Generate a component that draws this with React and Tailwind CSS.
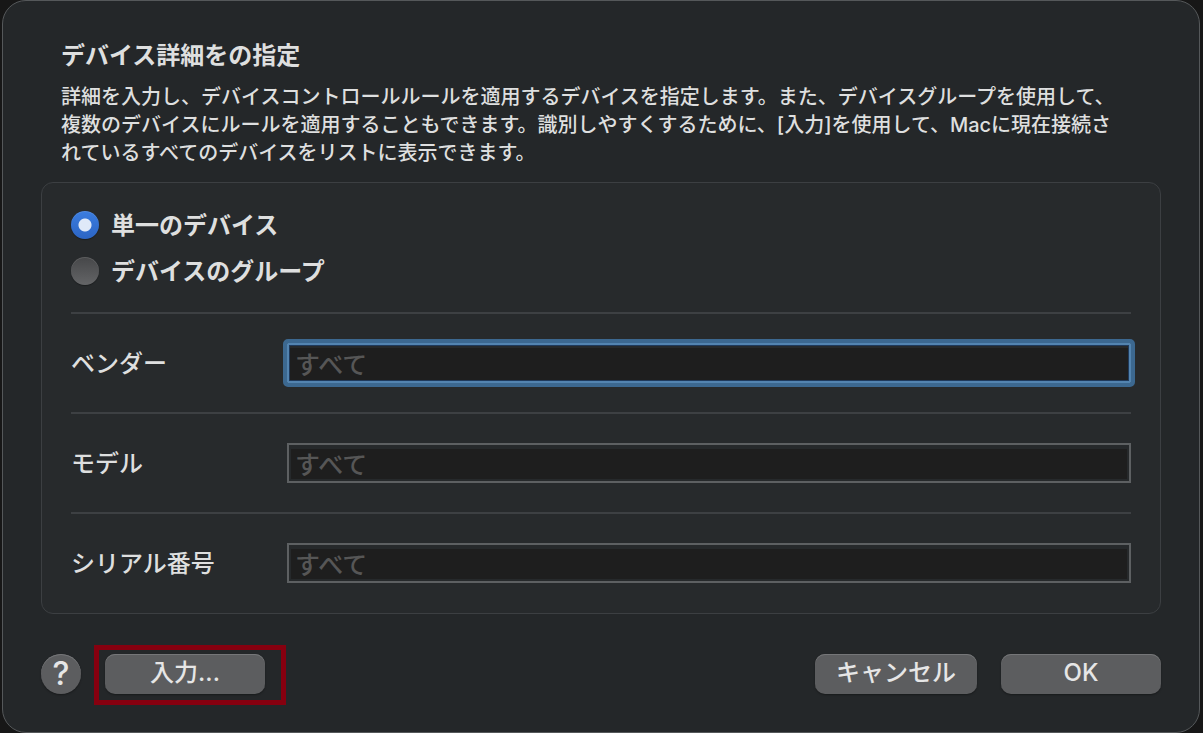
import { useState } from "react"

const fields = [
  { id: "vendor", label: "ベンダー" },
  { id: "model", label: "モデル" },
  { id: "serial", label: "シリアル番号" },
]

function Radio({ label, checked, onChange }) {
  return (
    <label className="flex items-center gap-3 h-[46px] text-2xl font-bold">
      <input
        type="radio"
        name="target"
        checked={checked}
        onChange={onChange}
        className="appearance-none shrink-0 size-7 rounded-full bg-linear-to-b from-[#464749] to-[#646567] shadow-[0_1px_1px_rgba(0,0,0,0.3),inset_0_1px_0_rgba(255,255,255,0.12)] checked:bg-[radial-gradient(circle,#dfe9f8_0_6px,transparent_7px),linear-gradient(#3b7de0,#2c65c4)]"
      />
      <span className="pt-0.5">{label}</span>
    </label>
  )
}

function Field({ id, label, focused, onFocus }) {
  return (
    <div className="flex items-center h-[100px] border-t-2 border-[#3d4043]">
      <label htmlFor={id} className="w-[216px] shrink-0 pt-0.5 text-2xl font-medium">
        {label}
      </label>
      <input
        id={id}
        type="text"
        placeholder="すべて"
        onFocus={onFocus}
        className={
          focused
            ? "flex-1 min-w-0 h-10 px-1.5 pt-1 border-2 border-[#5384b0] outline-4 outline-[#3c6890] rounded-[1px] bg-[#1e1e1e] shadow-[inset_0_0_0_1px_#1f3a5c,inset_0_3px_0_#26292b] text-[25px] font-medium placeholder:text-[#565656]"
            : "flex-1 min-w-0 h-10 px-1.5 pt-1 border-2 border-[#5d6062] outline-none bg-[#1e1e1e] shadow-[inset_0_0_0_2px_#26292b,inset_0_4px_0_#26292b] text-[25px] font-medium placeholder:text-[#565656]"
        }
      />
    </div>
  )
}

function PushButton({ children, className = "w-40" }) {
  return (
    <button
      type="button"
      className={`${className} h-10 pb-0.5 rounded-[10px] bg-[#5c5d5f] text-2xl font-medium text-[#e6e6e6] shadow-[0_1px_2px_rgba(0,0,0,0.35),inset_0_1px_0_#757678]`}
    >
      {children}
    </button>
  )
}

export default function App() {
  const [target, setTarget] = useState("single")
  const [active, setActive] = useState("vendor")

  return (
    <div className="min-h-screen flex bg-[#171717] pl-[2px] pr-[3px] font-['Inter','Noto_Sans_CJK_JP',sans-serif] text-[#dedfdf]">
      <div className="flex-1 flex flex-col px-[38px] pt-[39px] pb-[27px] border border-[#55585a] rounded-[24px] bg-[#242729]">
        <h1 className="px-5 text-2xl font-bold">デバイス詳細をの指定</h1>
        <p className="mt-[11px] px-5 text-xl leading-7 font-medium">
          詳細を入力し、デバイスコントロールルールを適用するデバイスを指定します。また、デバイスグループを使用して、
          <br />
          複数のデバイスにルールを適用することもできます。識別しやすくするために、[入力]を使用して、Macに現在接続さ
          <br />
          れているすべてのデバイスをリストに表示できます。
        </p>

        <div className="mt-[15px] px-[29px] pt-[19px] pb-px border border-[#3c3f42] rounded-xl bg-[#272a2c]">
          <fieldset className="pb-[18px]">
            <Radio
              label="単一のデバイス"
              checked={target === "single"}
              onChange={() => setTarget("single")}
            />
            <Radio
              label="デバイスのグループ"
              checked={target === "group"}
              onChange={() => setTarget("group")}
            />
          </fieldset>
          {fields.map((f) => (
            <Field
              key={f.id}
              id={f.id}
              label={f.label}
              focused={active === f.id}
              onFocus={() => setActive(f.id)}
            />
          ))}
        </div>

        <div className="mt-[31px] flex items-start">
          <button
            type="button"
            aria-label="ヘルプ"
            className="mt-[9px] size-10 rounded-full bg-[#5c5d5f] text-[32px] leading-none font-medium text-[#e6e6e6] shadow-[0_1px_2px_rgba(0,0,0,0.35),inset_0_1px_0_#757678]"
          >
            ?
          </button>
          <div className="ml-[13px] w-48 h-[60px] pl-[6px] pt-1 border-5 border-[#86000f]">
            <PushButton>入力...</PushButton>
          </div>
          <div className="mt-[9px] ml-auto flex gap-6">
            <PushButton className="w-[162px]">キャンセル</PushButton>
            <PushButton>OK</PushButton>
          </div>
        </div>
      </div>
    </div>
  )
}
